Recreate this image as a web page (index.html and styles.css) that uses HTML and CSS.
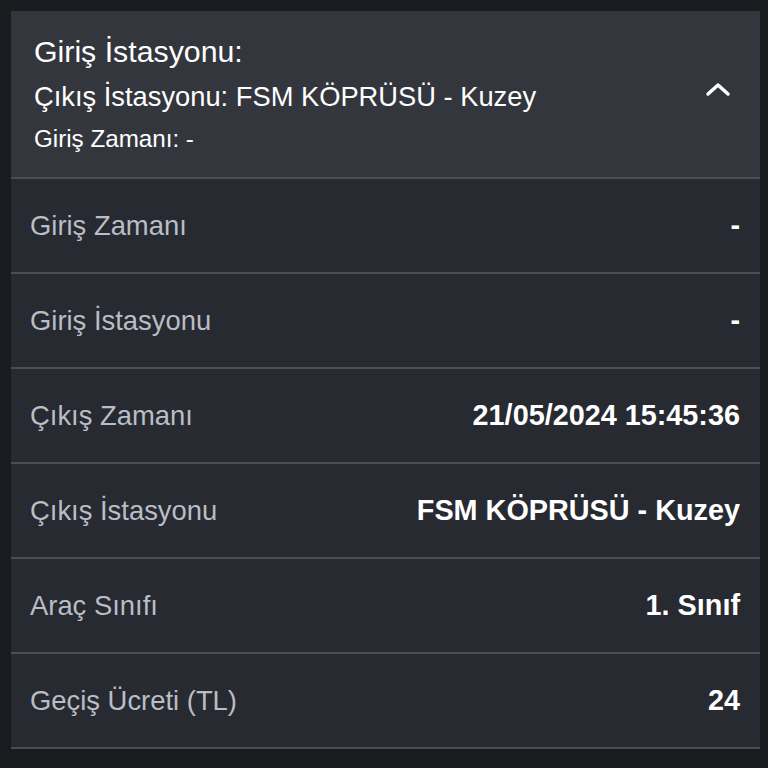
FILE: index.html
```html
<!DOCTYPE html>
<html lang="tr">
<head>
    <meta charset="UTF-8">
    <meta name="viewport" content="width=device-width, initial-scale=1.0">
    <title>Geçiş Detayı</title>
    <link rel="stylesheet" href="styles.css">
</head>
<body>
    <div class="pass-card">
        <div class="pass-header">
            <div class="header-text">
                <div class="header-title">Giriş İstasyonu:</div>
                <div class="header-sub">Çıkış İstasyonu: FSM KÖPRÜSÜ - Kuzey</div>
                <div class="header-small">Giriş Zamanı: -</div>
            </div>
            <svg class="toggle-icon" width="26" height="16" viewBox="0 0 26 16">
                <path d="M3 13 L13 4 L23 13" fill="none" stroke="#ffffff" stroke-width="3.5" stroke-linecap="round" stroke-linejoin="round"/>
            </svg>
        </div>

        <div class="detail-row">
            <span class="detail-label">Giriş Zamanı</span>
            <span class="detail-value">-</span>
        </div>
        <div class="detail-row">
            <span class="detail-label">Giriş İstasyonu</span>
            <span class="detail-value">-</span>
        </div>
        <div class="detail-row">
            <span class="detail-label">Çıkış Zamanı</span>
            <span class="detail-value">21/05/2024 15:45:36</span>
        </div>
        <div class="detail-row">
            <span class="detail-label">Çıkış İstasyonu</span>
            <span class="detail-value">FSM KÖPRÜSÜ - Kuzey</span>
        </div>
        <div class="detail-row">
            <span class="detail-label">Araç Sınıfı</span>
            <span class="detail-value">1. Sınıf</span>
        </div>
        <div class="detail-row">
            <span class="detail-label">Geçiş Ücreti (TL)</span>
            <span class="detail-value">24</span>
        </div>
    </div>
</body>
</html>
```

FILE: styles.css
```css
* { box-sizing: border-box; }
body {
    margin: 0;
    padding: 11px 8px 0 11px;
    background: #1a1b1e;
    font-family: 'Liberation Sans', Arial, sans-serif;
    height: 768px;
}

.pass-card {
    background: #272a31;
}

.pass-header {
    display: flex;
    align-items: flex-start;
    justify-content: space-between;
    height: 168px;
    padding: 21px 29px 0 23px;
    background: #33363d;
    border-bottom: 2px solid #4b4e55;
}
.header-text {
    color: #ffffff;
}
.header-title {
    font-size: 30.3px;
    line-height: 40px;
}
.header-sub {
    font-size: 27.3px;
    line-height: 49px;
}
.header-small {
    font-size: 24.2px;
    line-height: 35px;
}
.toggle-icon {
    margin-top: 49px;
}

.detail-row {
    display: flex;
    align-items: center;
    justify-content: space-between;
    height: 95px;
    padding: 0 20px 0 19px;
    border-bottom: 2px solid #4b4e55;
}
.detail-label {
    font-size: 27.4px;
    color: #b9bdc5;
}
.detail-value {
    font-size: 28.8px;
    font-weight: bold;
    color: #ffffff;
}
```
